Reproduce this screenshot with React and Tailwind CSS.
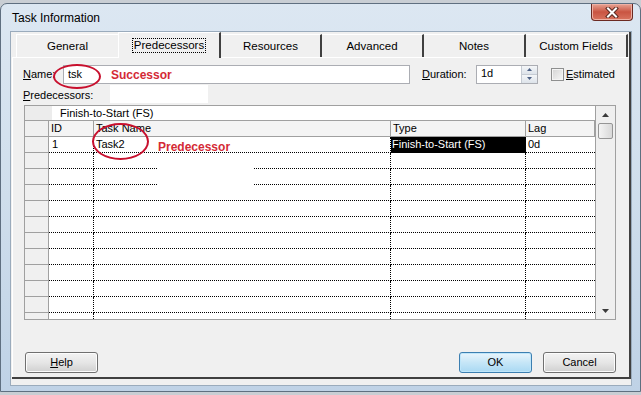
import React from 'react';

const rows = Array.from({ length: 12 }, (_, i) => i);

function Tab({ label, selected, last }) {
  if (selected) {
    return (
      <div className="relative z-10 -mb-px flex h-[26px] w-[103px] items-start justify-center border-l border-t border-white border-r-2 border-r-[#404040] bg-[#f0f0f0] pt-[5px]">
        <span className="border border-dotted border-black px-px text-[11.5px] leading-[13px]">{label}</span>
      </div>
    );
  }
  return (
    <div
      className={`mt-[2px] flex h-[23px] ${last ? 'w-[102px]' : 'w-[101px]'} items-center justify-center border-t border-white border-r-2 border-r-[#404040] bg-[#f0f0f0] pt-[2px] text-[11.5px]`}
    >
      {label}
    </div>
  );
}

function Button({ children, primary }) {
  return (
    <div
      className={`flex h-[21px] w-[73px] items-center justify-center rounded-[3px] border text-[11px] ${
        primary
          ? 'border-[#3c7fb1] bg-gradient-to-b from-[#e9f5fc] via-[#c6e6f7] to-[#a9d9f3] shadow-[inset_0_0_0_1px_#bfe6fa]'
          : 'border-[#707070] bg-gradient-to-b from-[#f3f3f3] via-[#e6e6e6] to-[#d0d0d0] shadow-[inset_0_0_0_1px_#fcfcfc]'
      }`}
    >
      {children}
    </div>
  );
}

export default function App() {
  return (
    <div className="relative h-[395px] w-[641px] overflow-hidden bg-[#c9ced4] font-['Liberation_Sans',Arial,sans-serif] text-black">
      <div className="mt-[3px] flex h-[389px] flex-col rounded-t-[7px] border border-[#5f6f80] bg-gradient-to-b from-[#dce7f2] via-[#cfdeec] to-[#bfd2e6] pb-[5px] pl-[9px] pr-[8px]">
        {/* title bar */}
        <div className="flex h-[27px] items-start justify-between">
          <span className="pl-[2px] pt-[7px] text-[12px] leading-[14px]">Task Information</span>
          <div className="-mr-px flex h-[17px] w-[42px] items-center justify-center rounded-b-[4px] border border-t-0 border-[#6b2a22] bg-gradient-to-b from-[#e6a394] via-[#c95442] to-[#d8735f] shadow-[inset_0_0_0_1px_#eeb0a4]">
            <svg width="14" height="11" viewBox="0 0 14 11">
              <path d="M3 1.5 L11 9.5 M11 1.5 L3 9.5" stroke="#5a2a22" strokeWidth="4" strokeLinecap="square" />
              <path d="M3 1.5 L11 9.5 M11 1.5 L3 9.5" stroke="#ffffff" strokeWidth="2" strokeLinecap="square" />
            </svg>
          </div>
        </div>

        {/* client area */}
        <div className="flex flex-1 flex-col border border-[#9aabbc] bg-[#f0f0f0] pb-[6px] pl-px">
          <div className="flex flex-1 flex-col border-b-2 border-r-2 border-[#404040]">
            {/* tabs */}
            <div className="flex h-[25px] items-start pl-[4px]">
              <div className="mt-[2px] flex h-[23px] w-[102px] items-center justify-center border-l border-t border-white bg-[#f0f0f0] pt-[2px] text-[11.5px]">
                General
              </div>
              <Tab label="Predecessors" selected />
              <Tab label="Resources" />
              <Tab label="Advanced" last />
              <Tab label="Notes" last />
              <Tab label="Custom Fields" last />
            </div>

            {/* panel */}
            <div className="flex flex-1 flex-col border-l border-t border-white text-[11px]">
              <div className="mt-[6px] flex h-[20px] items-center">
                <span className="ml-[10px] w-[40px]">
                  <u>N</u>ame:
                </span>
                <div className="flex h-[19px] w-[347px] items-center border border-[#abadb3] bg-white pl-[4px]">tsk</div>
                <span className="ml-[12px] w-[54px]">
                  <u>D</u>uration:
                </span>
                <div className="flex h-[19px] w-[62px] border border-[#abadb3] bg-white">
                  <span className="flex-1 pl-[4px] leading-[15px]">1d</span>
                  <div className="flex w-[16px] flex-col border-l border-[#c5cbd3]">
                    <div className="flex flex-1 items-center justify-center border-b border-[#c5cbd3] bg-gradient-to-b from-[#f4f6f8] to-[#dde3ea]">
                      <svg width="5" height="3" viewBox="0 0 5 3">
                        <path d="M2.5 0 L5 3 L0 3 Z" fill="#4d6185" />
                      </svg>
                    </div>
                    <div className="flex flex-1 items-center justify-center bg-gradient-to-b from-[#f4f6f8] to-[#dde3ea]">
                      <svg width="5" height="3" viewBox="0 0 5 3">
                        <path d="M0 0 L5 0 L2.5 3 Z" fill="#4d6185" />
                      </svg>
                    </div>
                  </div>
                </div>
                <div className="ml-[13px] h-[13px] w-[13px] border border-[#8e8f8f] bg-gradient-to-br from-[#d4d4d4] to-[#f7f7f7] shadow-[inset_0_0_0_1px_#f4f4f4]" />
                <span className="ml-[2px]">
                  <u>E</u>stimated
                </span>
              </div>

              <div className="ml-[10px] mt-[5px] h-[13px] leading-[13px]">
                <u>P</u>redecessors:
              </div>

              {/* grid */}
              <div className="ml-[11px] mt-[3px] flex h-[215px] w-[592px] overflow-hidden border border-[#a0a0a0] bg-white">
                <div className="flex w-[570px] flex-col overflow-hidden">
                  <div className="flex h-[15px] shrink-0 border-b border-[#a0a0a0]">
                    <div className="w-[27px] bg-[#ececec]" />
                    <span className="pl-[8px] leading-[14px]">Finish-to-Start (FS)</span>
                  </div>
                  <div className="flex h-[16px] shrink-0 bg-[#f4f4f4] leading-[15px]">
                    <div className="w-[24px] border-b border-r border-[#a0a0a0] bg-[#f0f0f0]" />
                    <div className="w-[45px] border-b border-r border-[#a0a0a0] pl-[2px]">ID</div>
                    <div className="w-[297px] border-b border-r border-[#a0a0a0] pl-[2px]">Task Name</div>
                    <div className="w-[135px] border-b border-r border-[#a0a0a0] pl-[2px]">Type</div>
                    <div className="w-[69px] border-b border-r border-[#a0a0a0] pl-[2px]">Lag</div>
                  </div>
                  {rows.map((i) => (
                    <div key={i} className="flex h-[16px] shrink-0 leading-[15px]">
                      <div className="w-[24px] border-b border-r border-[#a0a0a0] bg-[#f0f0f0]" />
                      <div className="w-[45px] border-b border-r border-dotted border-black pl-[3px]">{i === 0 ? '1' : ''}</div>
                      <div className="w-[297px] border-b border-r border-dotted border-black pl-[2px]">{i === 0 ? 'Task2' : ''}</div>
                      <div
                        className={`w-[135px] border-b border-r border-dotted border-black pl-px ${
                          i === 0 ? 'bg-black text-white' : ''
                        }`}
                      >
                        {i === 0 ? 'Finish-to-Start (FS)' : ''}
                      </div>
                      <div className="w-[69px] border-b border-dotted border-black pl-[2px]">
                        {i === 0 ? '0d' : ''}
                      </div>
                    </div>
                  ))}
                </div>
                <div className="flex flex-1 flex-col border-l border-[#a0a0a0] bg-[#efefef]">
                  <div className="flex h-[17px] items-center justify-center">
                    <svg width="7" height="4" viewBox="0 0 7 4">
                      <path d="M3.5 0 L7 4 L0 4 Z" fill="#3a3a3a" />
                    </svg>
                  </div>
                  <div className="mx-auto h-[16px] w-[15px] rounded-[2px] border border-[#959595] bg-gradient-to-r from-[#f4f4f4] to-[#d8d8d8]" />
                  <div className="mt-auto flex h-[17px] items-center justify-center">
                    <svg width="7" height="4" viewBox="0 0 7 4">
                      <path d="M0 0 L7 0 L3.5 4 Z" fill="#3a3a3a" />
                    </svg>
                  </div>
                </div>
              </div>

              {/* buttons */}
              <div className="mb-[4px] mt-auto flex pr-[13px]">
                <div className="ml-[12px]">
                  <Button>
                    <span>
                      <u>H</u>elp
                    </span>
                  </Button>
                </div>
                <div className="ml-auto flex gap-[11px]">
                  <Button primary>OK</Button>
                  <Button>Cancel</Button>
                </div>
              </div>
            </div>
          </div>
        </div>
      </div>

      {/* annotations */}
      <div className="absolute left-[110px] top-[85px] h-[18px] w-[98px] bg-white" />
      <div className="absolute left-[158px] top-[154px] h-[42px] w-[96px] bg-white" />
      <div className="absolute left-[53px] top-[64px] h-[25px] w-[48px] rounded-[50%] border-2 border-[#c8102e]" />
      <div className="absolute left-[92px] top-[123px] h-[37px] w-[57px] rounded-[50%] border-2 border-[#c8102e]" />
      <span className="absolute left-[111px] top-[68px] text-[12px] font-bold leading-[14px] text-[#d42a36]">Successor</span>
      <span className="absolute left-[158px] top-[140px] text-[12px] font-bold leading-[14px] text-[#d42a36]">Predecessor</span>
    </div>
  );
}
